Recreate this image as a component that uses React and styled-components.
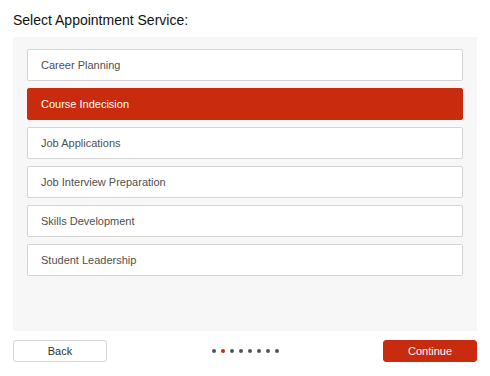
import styled, { createGlobalStyle } from 'styled-components';

const GlobalStyle = createGlobalStyle`
  html, body {
    margin: 0;
    padding: 0;
    background: #ffffff;
    font-family: "Liberation Sans", Arial, sans-serif;
  }
`;

const Page = styled.div`
  width: 490px;
  height: 376px;
  box-sizing: border-box;
  padding: 11px 13px 0 13px;
  display: flex;
  flex-direction: column;
`;

const Title = styled.h2`
  margin: 0 0 8px 0;
  font-size: 14px;
  font-weight: normal;
  color: #111;
  line-height: 18px;
`;

const Panel = styled.div`
  background: #f7f7f7;
  height: 294px;
  box-sizing: border-box;
  padding: 12px 14px;
  display: flex;
  flex-direction: column;
  gap: 7px;
`;

const Option = styled.button`
  height: 32px;
  box-sizing: border-box;
  text-align: left;
  padding: 0 13px;
  font-family: inherit;
  font-size: 11px;
  border-radius: 2px;
  cursor: pointer;
  border: 1px solid ${(p) => (p.$active ? '#c92b0e' : '#d4d4d4')};
  background: ${(p) => (p.$active ? '#c92b0e' : '#ffffff')};
  color: ${(p) => (p.$active ? '#ffffff' : '#505050')};
`;

const Footer = styled.div`
  display: flex;
  align-items: center;
  justify-content: space-between;
  margin-top: 9px;
`;

const NavButton = styled.button`
  width: 94px;
  height: 22px;
  box-sizing: border-box;
  border-radius: 3px;
  font-family: inherit;
  font-size: 11px;
  cursor: pointer;
  border: 1px solid ${(p) => (p.$primary ? '#c92b0e' : '#d4d4d4')};
  background: ${(p) => (p.$primary ? '#c92b0e' : '#ffffff')};
  color: ${(p) => (p.$primary ? '#ffffff' : '#333333')};
`;

const Dots = styled.div`
  display: flex;
  gap: 5px;
`;

const Dot = styled.span`
  width: 4px;
  height: 4px;
  border-radius: 50%;
  background: ${(p) => (p.$active ? '#c92b0e' : '#555555')};
`;

const services = [
  'Career Planning',
  'Course Indecision',
  'Job Applications',
  'Job Interview Preparation',
  'Skills Development',
  'Student Leadership',
];

export default function App() {
  return (
    <>
      <GlobalStyle />
      <Page>
        <Title>Select Appointment Service:</Title>
        <Panel>
          {services.map((s) => (
            <Option key={s} $active={s === 'Course Indecision'}>
              {s}
            </Option>
          ))}
        </Panel>
        <Footer>
          <NavButton>Back</NavButton>
          <Dots>
            {Array.from({ length: 8 }).map((_, i) => (
              <Dot key={i} $active={i === 1} />
            ))}
          </Dots>
          <NavButton $primary>Continue</NavButton>
        </Footer>
      </Page>
    </>
  );
}
